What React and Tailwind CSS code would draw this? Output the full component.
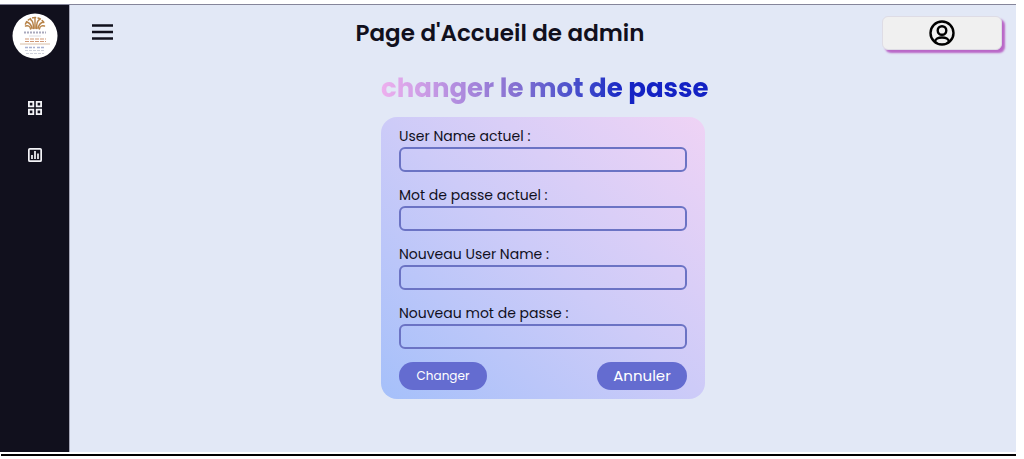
const fields = [
  { id: "current-name", label: "User Name actuel :", type: "text" },
  { id: "current-password", label: "Mot de passe actuel :", type: "password" },
  { id: "new-name", label: "Nouveau User Name :", type: "text" },
  { id: "new-password", label: "Nouveau mot de passe :", type: "password" },
];

function Logo() {
  return (
    <svg viewBox="0 0 46 46" className="size-[46px]" role="img" aria-label="Logo">
      <circle cx="23" cy="23" r="22.5" fill="#fff" />
      <g fill="none" stroke="#b78348" strokeWidth="1.400" strokeLinecap="round">
        <path d="M18.500 16Q18 12 13.500 13M20 15.500Q19 10 14.500 9M21.500 15.500Q21.500 8 18.500 6.500M23 15.500V5M24.500 15.500Q24.500 8 27.500 6.500M26 15.500Q27 10 31.500 9M27.500 16Q28 12 32.500 13" />
        <path d="M13.500 11Q16 5 23 4.500Q30 5 32.500 11" strokeWidth="1.600" strokeDasharray="2.500 2.500" />
      </g>
      <path d="M12 19.500h22" stroke="#a9a9bd" strokeWidth="2.200" strokeDasharray="2 1" />
      <path d="M17 23h12" stroke="#dcdce2" />
      <path d="M13 26h21M13 28.500h21" stroke="#cf9877" strokeWidth="1.200" strokeDasharray="4 1" />
      <path d="M8 31h30" stroke="#d9bea5" />
      <path d="M13 34.500h10M25 34.500h8" stroke="#a8b1d2" strokeWidth="1.400" strokeDasharray="3 1" />
      <path d="M13 37.500h20M14 40.500h18" stroke="#cfd2dc" strokeDasharray="3 1" />
    </svg>
  );
}

function Sidebar() {
  return (
    <aside className="flex w-[69px] shrink-0 flex-col items-center bg-[#11101d] pt-2">
      <Logo />
      <nav className="mt-[37px] flex flex-col items-center gap-[23px]">
        <a href="#tableau" aria-label="Tableau de bord" className="flex size-6 items-center justify-center text-[#f4f4f8]">
          <svg viewBox="0 0 14 14" className="size-[14px]" fill="none" stroke="currentColor" strokeWidth="1.800">
            <path d="M.9.900h4.400v4.400H.9zM8.700.900h4.400v4.400H8.700zM.9 8.700h4.400v4.400H.9zM8.700 8.700h4.400v4.400H8.700z" />
          </svg>
        </a>
        <a href="#statistiques" aria-label="Statistiques" className="flex size-6 items-center justify-center text-[#f4f4f8]">
          <svg viewBox="0 0 14 14" className="size-[14px]" fill="none" stroke="currentColor" strokeWidth="1.700">
            <rect x=".85" y=".85" width="12.300" height="12.300" rx="1" />
            <path d="M4 11V7M7 11V3M10 11V5.500" />
          </svg>
        </a>
      </nav>
    </aside>
  );
}

function Header() {
  return (
    <header className="flex items-start justify-between pr-[14px] pl-[22px]">
      <button type="button" aria-label="Menu" className="mt-[18px] text-[#11101d]">
        <svg viewBox="0 0 22 18" className="h-[18px] w-[22px]" stroke="currentColor" strokeWidth="2.400">
          <path d="M0 2.500h21M0 9h21M0 15.500h21" />
        </svg>
      </button>
      <h1 className="mt-3 pl-1 text-[23px] leading-8 font-semibold text-[#11101d]">Page d'Accueil de admin</h1>
      <button
        type="button"
        aria-label="Profil"
        className="mt-[11px] flex h-[34px] w-[120px] items-center justify-center rounded-md border border-[#dedce5] bg-[#f0f0f0] text-black shadow-[3px_3px_2px_#b967c7]"
      >
        <svg viewBox="0 0 26 26" className="size-[26px]" fill="none" stroke="currentColor" strokeWidth="2.400">
          <circle cx="13" cy="13" r="11.500" />
          <circle cx="13" cy="10.500" r="4.300" />
          <path d="M6 22C6 16 20 16 20 22" />
        </svg>
      </button>
    </header>
  );
}

export default function App() {
  return (
    <div className="flex min-h-screen flex-col bg-white pt-1 pr-2 pb-[3px] font-['Poppins','Inter',sans-serif]">
      <div className="flex grow border-t border-[#85859a]">
        <Sidebar />
        <main className="grow border-l border-[#a6a7b8] bg-[#e2e8f6]">
          <Header />
          <section className="mx-auto w-[324px]">
            <h2 className="mt-5 w-fit bg-linear-to-r from-[#eeb0ee] via-[#8872d2] via-40% to-[#1422c4] to-75% bg-clip-text text-[26px] leading-9 font-bold whitespace-nowrap text-transparent">
              changer le mot de passe
            </h2>
            <form className="mt-[11px] rounded-2xl bg-linear-to-tr from-[#a5c0fa] via-[#cdcbf8] to-[#efd3f5] px-[18px] pt-2 pb-[9px]">
              <div className="flex flex-col gap-3">
                {fields.map((field) => (
                  <div key={field.id}>
                    <label htmlFor={field.id} className="block text-sm leading-[22px] text-[#11101d]">
                      {field.label}
                    </label>
                    <input
                      id={field.id}
                      type={field.type}
                      className="block h-[25px] w-full rounded-md border-2 border-[#6b73c4] bg-transparent px-2 outline-none"
                    />
                  </div>
                ))}
              </div>
              <div className="mt-[13px] flex justify-between text-white">
                <button type="submit" className="h-7 w-[88px] rounded-full bg-[#646cd0] text-xs">
                  Changer
                </button>
                <button type="reset" className="h-7 w-[90px] rounded-full bg-[#646cd0] text-[15px]">
                  Annuler
                </button>
              </div>
            </form>
          </section>
        </main>
      </div>
      <hr className="mt-[2px] ml-px border-t-2 border-black" />
    </div>
  );
}
